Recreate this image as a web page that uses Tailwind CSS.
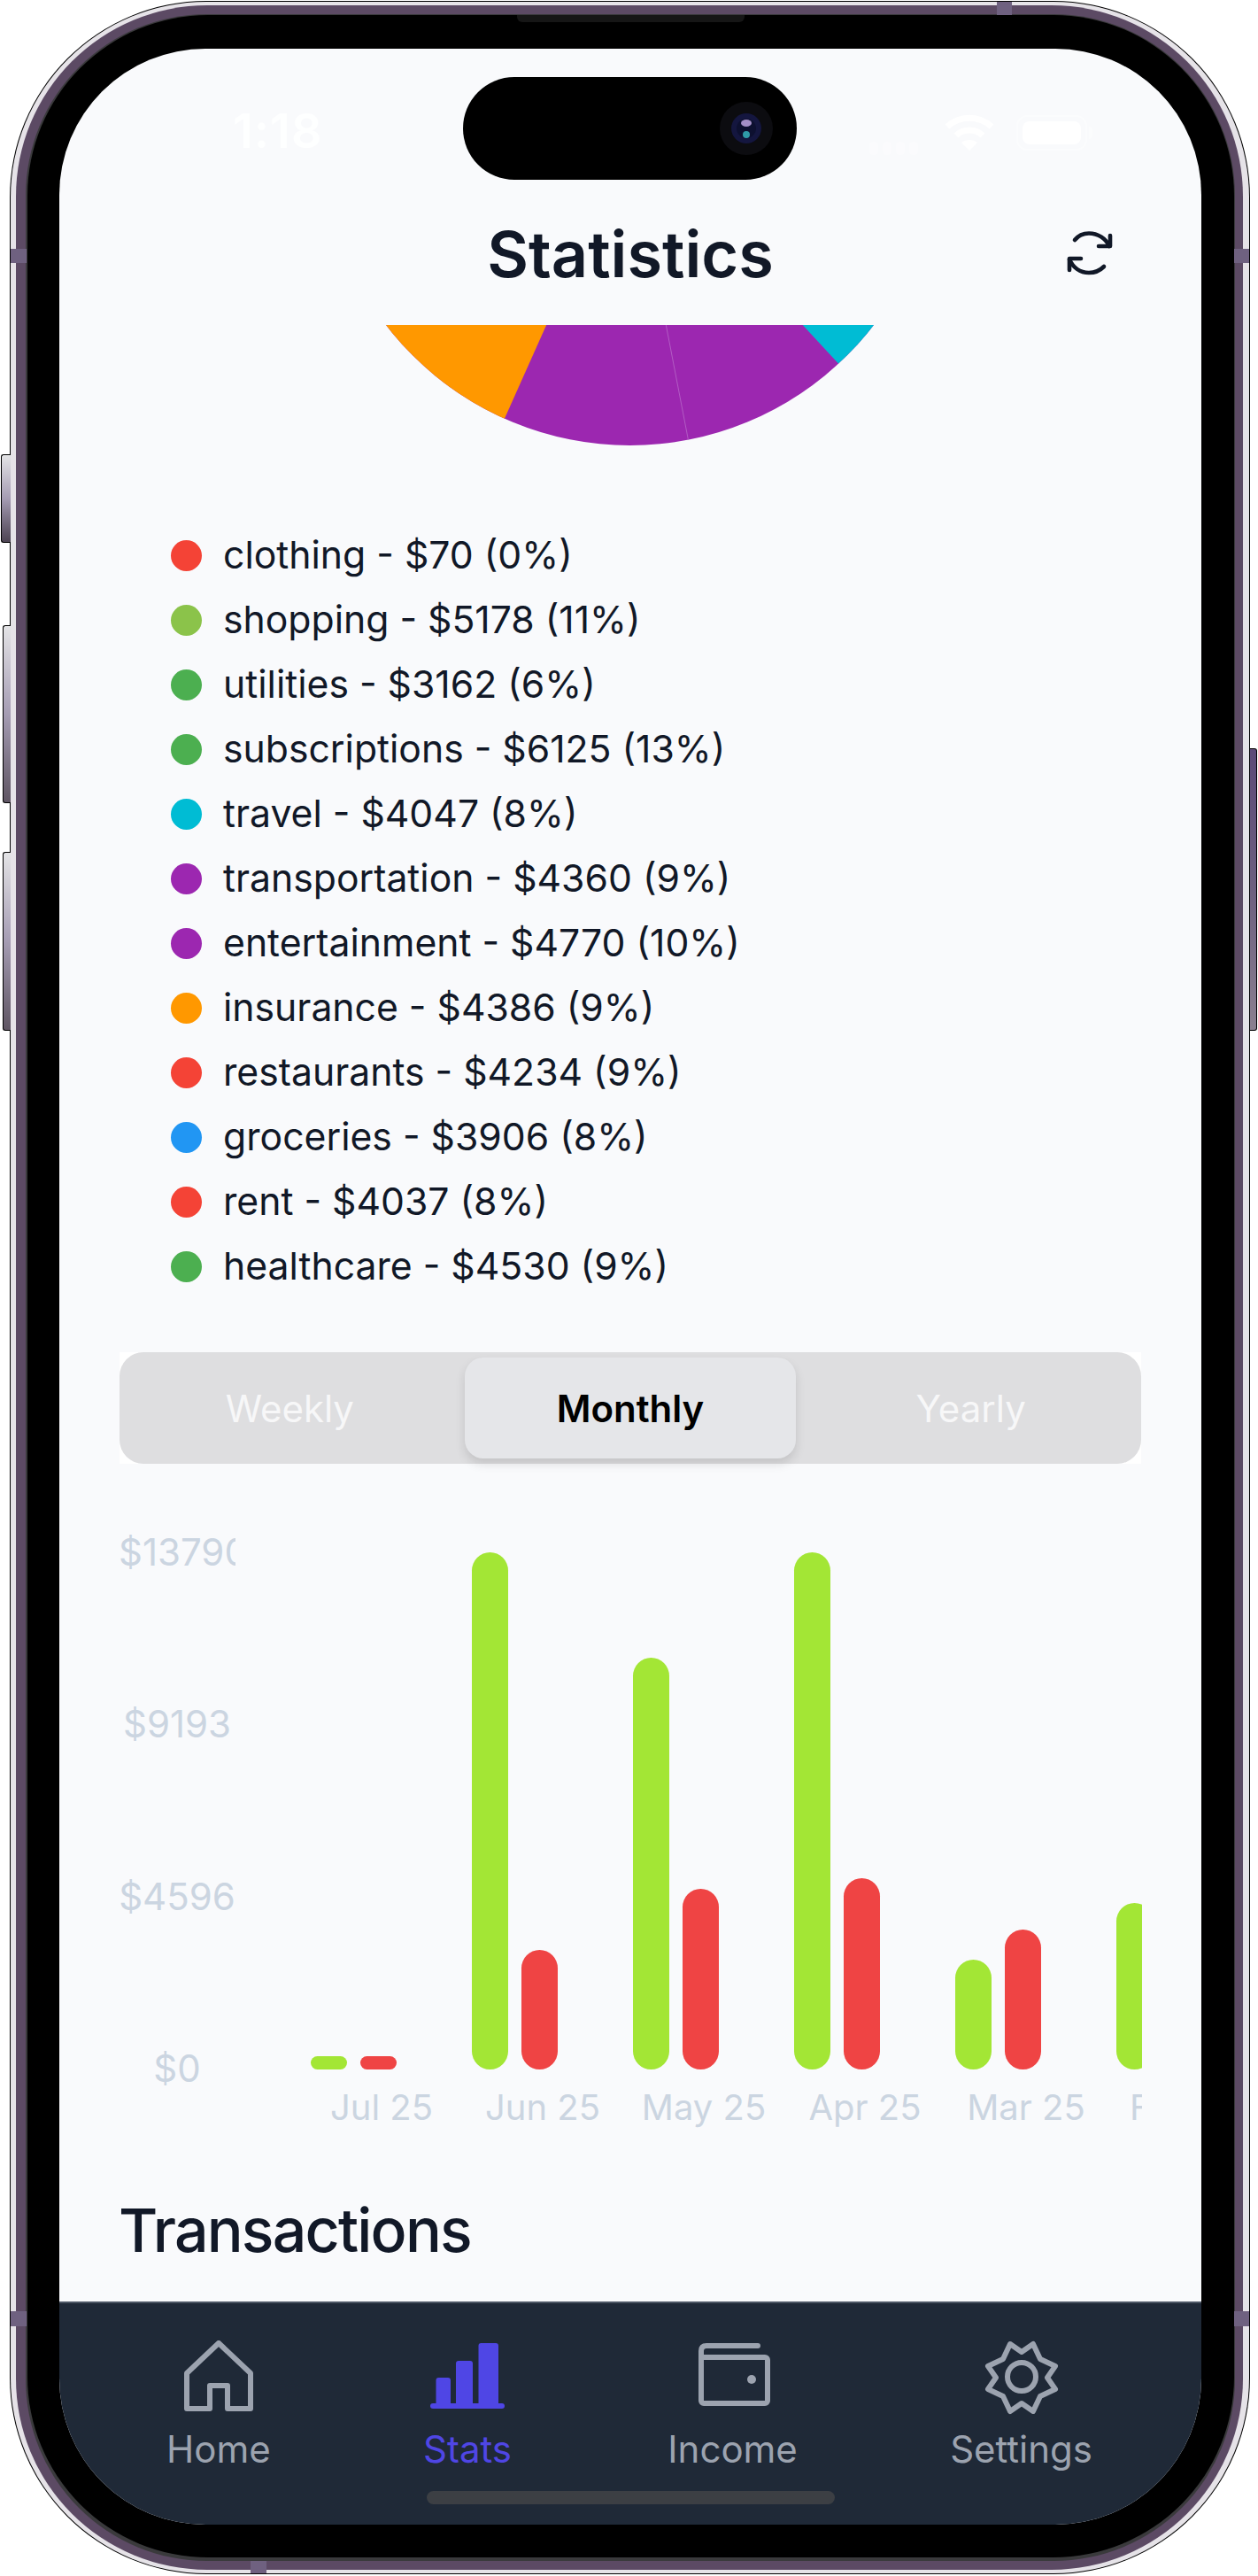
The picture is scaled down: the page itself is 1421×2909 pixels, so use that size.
<!DOCTYPE html>
<html lang="en">
<head>
  <meta charset="UTF-8" />
  <meta name="viewport" content="width=device-width, initial-scale=1.0" />
  <title>Statistics</title>
  <script src="https://cdn.jsdelivr.net/npm/@tailwindcss/browser@4"></script>
</head>
<body class="bg-white [font-family:Inter,sans-serif] overflow-hidden">
  <div class="relative w-[1421px] h-[2909px] pt-px">

    <!-- Side buttons -->
    <div class="absolute left-px top-[513px] w-[11px] h-[100px] border border-r-0 border-black rounded-l-[3px] bg-linear-to-b from-[#e4e4e6] via-[#a59cb3] to-[#4d4453]"></div>
    <div class="absolute left-[3px] top-[706px] w-[9px] h-[201px] border border-r-0 border-black rounded-l-[3px] bg-linear-to-b from-[#e4e4e6] via-[#a59cb3] to-[#5f5563]"></div>
    <div class="absolute left-[3px] top-[962px] w-[9px] h-[202px] border border-r-0 border-black rounded-l-[3px] bg-linear-to-b from-[#e4e4e6] via-[#a59cb3] to-[#5f5563]"></div>
    <div class="absolute left-[1412px] top-[845px] w-[8px] h-[319px] border border-l-0 border-black rounded-r-[3px] bg-linear-to-b from-[#5c4a78] via-[#6d6080] to-[#8a8090]"></div>

    <!-- Phone frame -->
    <div class="ml-[11px] w-[1401px] h-[2906px] p-px bg-black rounded-[222px]">
      <div class="w-full h-full pl-[6px] pt-[4px] pr-[7px] pb-[4px] bg-[#e6e3e8] rounded-[221px]">
        <div class="w-full h-full pl-[11px] pt-[10px] pr-[9px] pb-[10px] bg-[#5c4a64] rounded-[216px]">
          <div class="w-full h-full pl-[2px] pt-px pr-px pb-[4px] bg-[#3a3a3c] rounded-[205px]">
            <div class="w-full h-full pl-[36px] pt-[38px] pr-[37px] pb-[37px] bg-black rounded-[204px]">

              <!-- Screen -->
              <div class="relative flex flex-col w-[1290px] h-[2796px] overflow-hidden rounded-[165px] bg-[#f9fafc]">

                <!-- Header -->
                <header class="grid grid-cols-[1fr_auto_1fr] items-end h-[312px] pb-[37px] shrink-0">
                  <div></div>
                  <h1 class="text-[72px] leading-[86px] font-semibold text-[#111827]">Statistics</h1>
                  <div class="flex justify-end pr-[77px]">
                    <svg class="w-[100px] h-[90px]" viewBox="0 0 100 90" fill="none" stroke="#111827" stroke-width="4.6" stroke-linecap="round" stroke-linejoin="round">
                      <path d="M34 31C38 26 44 23.500 50 23.500C60 23.500 69 29 73 38" />
                      <path d="M74 26V38H61" />
                      <path d="M67 61C63 65 57 68 50 68C40 68 32 62 28 53" />
                      <path d="M28 65V52H41" />
                    </svg>
                  </div>
                </header>

                <!-- Scrolled content -->
                <main class="flex-1 overflow-hidden">
                  <!-- Pie, scrolled mostly out of view -->
                  <div class="h-[224px] flex justify-center">
                    <svg class="w-[700px] h-[140px]" viewBox="362 367 700 140">
                      <defs>
                        <clipPath id="pie"><circle cx="711.500" cy="156" r="347" /></clipPath>
                      </defs>
                      <g clip-path="url(#pie)">
                        <rect x="300" y="300" width="800" height="300" fill="#9c27b0" />
                        <polygon points="711.500,156 488,656 0,656 0,156" fill="#ff9800" />
                        <polygon points="711.500,156 1174,656 1400,656 1400,156" fill="#00bcd4" />
                        <line x1="711.500" y1="156" x2="780" y2="510" stroke="#b25cc4" stroke-width="1" />
                      </g>
                    </svg>
                  </div>

                  <!-- Legend -->
                  <ul class="pl-[126px] text-[42.7px] text-[#111827]">
                    <li class="flex items-center h-[73px]"><span class="w-[35px] h-[35px] rounded-full bg-[#f44336] mr-[24px]"></span>clothing - $70 (0%)</li>
                    <li class="flex items-center h-[73px]"><span class="w-[35px] h-[35px] rounded-full bg-[#8bc34a] mr-[24px]"></span>shopping - $5178 (11%)</li>
                    <li class="flex items-center h-[73px]"><span class="w-[35px] h-[35px] rounded-full bg-[#4caf50] mr-[24px]"></span>utilities - $3162 (6%)</li>
                    <li class="flex items-center h-[73px]"><span class="w-[35px] h-[35px] rounded-full bg-[#4caf50] mr-[24px]"></span>subscriptions - $6125 (13%)</li>
                    <li class="flex items-center h-[73px]"><span class="w-[35px] h-[35px] rounded-full bg-[#00bcd4] mr-[24px]"></span>travel - $4047 (8%)</li>
                    <li class="flex items-center h-[73px]"><span class="w-[35px] h-[35px] rounded-full bg-[#9c27b0] mr-[24px]"></span>transportation - $4360 (9%)</li>
                    <li class="flex items-center h-[73px]"><span class="w-[35px] h-[35px] rounded-full bg-[#9c27b0] mr-[24px]"></span>entertainment - $4770 (10%)</li>
                    <li class="flex items-center h-[73px]"><span class="w-[35px] h-[35px] rounded-full bg-[#ff9800] mr-[24px]"></span>insurance - $4386 (9%)</li>
                    <li class="flex items-center h-[73px]"><span class="w-[35px] h-[35px] rounded-full bg-[#f44336] mr-[24px]"></span>restaurants - $4234 (9%)</li>
                    <li class="flex items-center h-[73px]"><span class="w-[35px] h-[35px] rounded-full bg-[#2196f3] mr-[24px]"></span>groceries - $3906 (8%)</li>
                    <li class="flex items-center h-[73px]"><span class="w-[35px] h-[35px] rounded-full bg-[#f44336] mr-[24px]"></span>rent - $4037 (8%)</li>
                    <li class="flex items-center h-[73px]"><span class="w-[35px] h-[35px] rounded-full bg-[#4caf50] mr-[24px]"></span>healthcare - $4530 (9%)</li>
                  </ul>

                  <!-- Period switch -->
                  <div class="mt-[60px] mx-[68px] bg-white">
                    <div class="grid grid-cols-3 h-[126px] bg-[#dedee0] rounded-[27px] text-[42px]">
                      <div class="flex items-center justify-center text-[#f7f7f8]">Weekly</div>
                      <div class="flex items-center justify-center mx-[5px] my-[6px] bg-[#e5e6e9] rounded-[21px] shadow-[0_6px_12px_rgba(0,0,0,0.12)] font-semibold text-black">Monthly</div>
                      <div class="flex items-center justify-center text-[#f7f7f8]">Yearly</div>
                    </div>
                  </div>

                  <!-- Income / expense chart -->
                  <div class="flex mt-[73px] ml-[67px] w-[1156px] text-[42px] leading-[50px] text-[#cbd5e1]">
                    <div class="flex flex-col justify-between items-center w-[132px] h-[635px] pt-[2px] shrink-0 overflow-hidden">
                      <span class="self-start whitespace-nowrap">$13790</span>
                      <span>$9193</span>
                      <span>$4596</span>
                      <span>$0</span>
                    </div>
                    <div class="w-[1024px] overflow-hidden">
                      <div class="flex items-end h-[611px] pl-[85px] gap-[85px]">
                        <div class="flex items-end gap-[15px] shrink-0"><div class="w-[41px] h-[15px] rounded-full bg-[#a3e635]"></div><div class="w-[41px] h-[15px] rounded-full bg-[#ef4444]"></div></div>
                        <div class="flex items-end gap-[15px] shrink-0"><div class="w-[41px] h-[584px] rounded-full bg-[#a3e635]"></div><div class="w-[41px] h-[135px] rounded-full bg-[#ef4444]"></div></div>
                        <div class="flex items-end gap-[15px] shrink-0"><div class="w-[41px] h-[465px] rounded-full bg-[#a3e635]"></div><div class="w-[41px] h-[204px] rounded-full bg-[#ef4444]"></div></div>
                        <div class="flex items-end gap-[15px] shrink-0"><div class="w-[41px] h-[584px] rounded-full bg-[#a3e635]"></div><div class="w-[41px] h-[216px] rounded-full bg-[#ef4444]"></div></div>
                        <div class="flex items-end gap-[15px] shrink-0"><div class="w-[41px] h-[124px] rounded-full bg-[#a3e635]"></div><div class="w-[41px] h-[158px] rounded-full bg-[#ef4444]"></div></div>
                        <div class="flex items-end gap-[15px] shrink-0"><div class="w-[41px] h-[188px] rounded-full bg-[#a3e635]"></div><div class="w-[41px] h-[90px] rounded-full bg-[#ef4444]"></div></div>
                      </div>
                      <div class="flex mt-[18px] pl-[74px] text-[40px] whitespace-nowrap">
                        <span class="w-[182px] shrink-0 text-center">Jul 25</span>
                        <span class="w-[182px] shrink-0 text-center">Jun 25</span>
                        <span class="w-[182px] shrink-0 text-center">May 25</span>
                        <span class="w-[182px] shrink-0 text-center">Apr 25</span>
                        <span class="w-[182px] shrink-0 text-center">Mar 25</span>
                        <span class="w-[182px] shrink-0 text-center">Feb 25</span>
                      </div>
                    </div>
                  </div>

                  <h2 class="mt-[70px] ml-[67px] text-[68px] leading-[86px] tracking-[-1.8px] font-medium text-[#111827]">Transactions</h2>
                </main>

                <!-- Tab bar -->
                <nav class="relative flex justify-between shrink-0 h-[252px] pl-[121px] pr-[123px] pt-[42px] bg-[#1f2937] border-t-2 border-[#4b5563] text-[42px] leading-[50px] text-[#9ca3af]">
                  <a class="flex flex-col items-center gap-[14px]">
                    <svg class="w-[84px] h-[84px]" viewBox="0 0 84 84" fill="none" stroke="#9ca3af" stroke-width="6" stroke-linejoin="round">
                      <path d="M32 77H6V37L42 3L78 37V77H52V51H32Z" />
                    </svg>
                    Home
                  </a>
                  <a class="flex flex-col items-center gap-[14px] mr-[4px] text-[#4f46e5]">
                    <svg class="w-[86px] h-[84px]" viewBox="0 0 86 84" fill="#4f46e5">
                      <rect x="7.500" y="42" width="16.500" height="32" rx="3" />
                      <rect x="30" y="23" width="19" height="51" rx="3" />
                      <rect x="55.500" y="3" width="22.500" height="71" rx="3" />
                      <rect x="1" y="71" width="84" height="6" rx="3" />
                    </svg>
                    Stats
                  </a>
                  <a class="flex flex-col items-center gap-[14px]">
                    <svg class="w-[84px] h-[84px]" viewBox="0 0 84 84" fill="none" stroke="#9ca3af" stroke-width="6" stroke-linecap="round" stroke-linejoin="round">
                      <rect x="6" y="19" width="75" height="52" rx="3" />
                      <path d="M6 24V12Q6 6 12 6H70" />
                      <circle cx="63" cy="44" r="5" fill="#9ca3af" stroke="none" />
                    </svg>
                    Income
                  </a>
                  <a class="flex flex-col items-center gap-[14px]">
                    <svg class="w-[84px] h-[84px]" viewBox="0 0 84 84" fill="none" stroke="#9ca3af" stroke-width="6" stroke-linejoin="round">
                      <polygon points="55,4 63,21 80,29 71,42 80,55 63,63 55,80 42,71 29,80 21,63 4,55 13,42 4,29 21,21 29,4 42,13" />
                      <circle cx="42" cy="41" r="16" />
                    </svg>
                    Settings
                  </a>
                  <!-- Home indicator -->
                  <div class="absolute left-[415px] top-[212px] w-[461px] h-[15px] rounded-full bg-[#3c3f44]"></div>
                </nav>

                <!-- Status bar, white on the light page -->
                <span class="absolute left-[196px] top-[62px] text-[54px] leading-[62px] tracking-[1px] font-semibold text-white/90">1:18</span>
                <div class="absolute left-[915px] top-[105px] flex gap-[5px]">
                  <span class="w-[10px] h-[15px] rounded-sm bg-white/30"></span>
                  <span class="w-[10px] h-[15px] rounded-sm bg-white/30"></span>
                  <span class="w-[10px] h-[15px] rounded-sm bg-white/30"></span>
                  <span class="w-[10px] h-[15px] rounded-sm bg-white/30"></span>
                </div>
                <svg class="absolute left-[1000px] top-[74px] w-[56px] h-[42px]" viewBox="0 0 56 42" fill="none" stroke="#ffffff" stroke-width="7">
                  <path d="M3 14C17 1 39 1 53 14" />
                  <path d="M13 24C21 16 35 16 43 24" />
                  <path d="M28 41L19 32C24 28 32 28 37 32Z" fill="#ffffff" stroke="none" />
                </svg>
                <div class="absolute left-[1081px] top-[75px] w-[80px] h-[40px] p-[5px] rounded-[12px] border-2 border-white/40">
                  <div class="w-full h-full rounded-[8px] bg-white"></div>
                </div>
                <div class="absolute left-[1163px] top-[88px] w-[4px] h-[14px] rounded-r-sm bg-white/40"></div>

                <!-- Dynamic island -->
                <div class="absolute left-[456px] top-[32px] flex items-center justify-end w-[377px] h-[116px] pr-[27px] rounded-[58px] bg-black">
                  <svg class="w-[60px] h-[60px]" viewBox="0 0 60 60">
                    <circle cx="30" cy="30" r="30" fill="#0c0c10" />
                    <circle cx="30" cy="30" r="17" fill="#14163f" />
                    <circle cx="30" cy="30" r="11" fill="#0d1030" />
                    <ellipse cx="30" cy="24" rx="6" ry="4" fill="#a48fc8" />
                    <circle cx="30" cy="37" r="4" fill="#2f9aa8" />
                  </svg>
                </div>
              </div>

            </div>
          </div>
        </div>
      </div>
    </div>

    <!-- Speaker slit and antenna bands -->
    <div class="absolute left-[584px] top-[17px] w-[257px] h-[8px] rounded-b-[6px] bg-[#161616]"></div>
    <div class="absolute left-[12px] top-[281px] w-[18px] h-[16px] bg-[#6f6180]"></div>
    <div class="absolute left-[1394px] top-[281px] w-[17px] h-[16px] bg-[#6f6180]"></div>
    <div class="absolute left-[12px] top-[2610px] w-[18px] h-[17px] bg-[#6f6180]"></div>
    <div class="absolute left-[1394px] top-[2610px] w-[17px] h-[17px] bg-[#6f6180]"></div>
    <div class="absolute left-[1126px] top-[2px] w-[17px] h-[15px] bg-[#6f6180]"></div>
    <div class="absolute left-[283px] top-[2892px] w-[18px] h-[14px] bg-[#6f6180]"></div>
  </div>
</body>
</html>
